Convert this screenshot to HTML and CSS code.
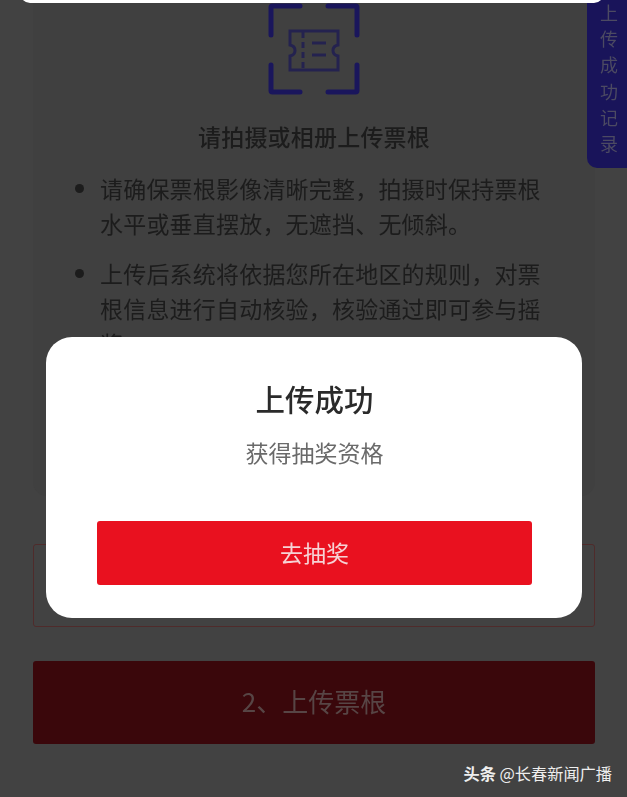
FILE: index.html
```html
<!DOCTYPE html>
<html>

	<head>
		<meta charset="UTF-8">
		<title>上传成功</title>
		<link rel="stylesheet" href="styles.css">
	</head>

	<body>
		<div class="page">
			<div class="top-sheet"></div>

			<div class="card">
				<svg class="scan-icon" width="92" height="92" viewBox="0 0 92 92" fill="none">
					<path d="M3 32V4.500Q3 3 4.500 3H32M60 3H87.500Q89 3 89 4.500V32M89 62V87.500Q89 89 87.500 89H60M32 89H4.500Q3 89 3 87.500V62" stroke="#1a165c" stroke-width="5" stroke-linecap="round" />
					<path d="M22 28H70V42Q65 43 65 47.500T70 53V67H22V53Q27 52 27 47.500T22 42Z" stroke="#24224f" stroke-width="3" />
					<path d="M35 29V66" stroke="#24224f" stroke-width="3" stroke-dasharray="6 4" />
					<path d="M44 40H58M44 52H58" stroke="#24224f" stroke-width="3" />
				</svg>
				<h2 class="card-title">请拍摄或相册上传票根</h2>
				<ul class="tips">
					<li>请确保票根影像清晰完整，拍摄时保持票根水平或垂直摆放，无遮挡、无倾斜。</li>
					<li>上传后系统将依据您所在地区的规则，对票根信息进行自动核验，核验通过即可参与摇奖。</li>
				</ul>
			</div>

			<div class="btn-outline"></div>
			<div class="btn-upload">2、上传票根</div>

			<div class="side-tab">上<br>传<br>成<br>功<br>记<br>录</div>

			<div class="modal">
				<h1 class="modal-title">上传成功</h1>
				<p class="modal-text">获得抽奖资格</p>
				<div class="modal-btn">去抽奖</div>
			</div>

			<div class="watermark"><b>头条</b> @长春新闻广播</div>
		</div>
	</body>

</html>
```

FILE: styles.css
```css
* {
	box-sizing: border-box;
}

html,
body {
	margin: 0;
	padding: 0;
}

body {
	background-color: #424242;
	font-family: "Noto Sans CJK SC", "Liberation Sans", sans-serif;
}

.page {
	position: relative;
	width: 627px;
	height: 797px;
	overflow: hidden;
	padding: 0 32px 0 33px;
}

/* 截图是压缩过的，稍微糊一点才像 */
.card,
.btn-upload,
.side-tab,
.modal {
	filter: blur(0.4px);
}

.top-sheet {
	position: absolute;
	z-index: 2;
	top: -20px;
	left: 20px;
	width: 584px;
	height: 23px;
	background-color: #fff;
	border-radius: 10px;
}

.card {
	height: 496px;
	padding-top: 3px;
	background-color: #404040;
	border-radius: 0 0 14px 14px;
	text-align: center;
	margin-bottom: 48px;
}

.scan-icon {
	display: block;
	margin: 0 auto;
}

.card-title {
	margin: 24px 0 0;
	font-size: 23px;
	line-height: 35px;
	font-weight: 500;
	letter-spacing: 0.2px;
	color: #1c1c1c;
}

.tips {
	margin: 17px 0 0;
	padding: 0 53px 0 67px;
	text-align: left;
	font-size: 23px;
	line-height: 35px;
	color: #1c1c1c;
	letter-spacing: 0.2px;
}

.tips li {
	margin-bottom: 15px;
}

.btn-outline {
	height: 83px;
	border: 1px solid #4f2b2b;
	border-radius: 3px;
	margin-bottom: 34px;
}

.btn-upload {
	height: 83px;
	background-color: #3a070b;
	border-radius: 3px;
	color: #574545;
	font-size: 26px;
	line-height: 80px;
	text-align: center;
}

.side-tab {
	position: absolute;
	top: -10px;
	right: 0;
	width: 40px;
	height: 178px;
	padding: 9px 0 0 4px;
	background-color: #19145a;
	border-radius: 10px 0 0 10px;
	color: #4c4a62;
	font-size: 18px;
	line-height: 26.200px;
	text-align: center;
}

.modal {
	position: absolute;
	top: 337px;
	left: 46px;
	width: 536px;
	height: 281px;
	padding: 38px 50px 0 51px;
	background-color: #fff;
	border-radius: 26px;
	text-align: center;
}

.modal-title {
	margin: 0;
	font-size: 29.500px;
	line-height: 46px;
	font-weight: 500;
	color: #2a2a2a;
}

.modal-text {
	margin: 14px 0 0;
	font-size: 23px;
	line-height: 34px;
	color: #6a6a6a;
}

.modal-btn {
	height: 64px;
	margin-top: 52px;
	background-color: #e9111f;
	border-radius: 3px;
	color: #f6d3d5;
	font-size: 23px;
	line-height: 63px;
}

.watermark {
	position: absolute;
	right: 15px;
	bottom: 12px;
	color: #eee;
	font-size: 16.200px;
	line-height: 24px;
	white-space: nowrap;
}
```
